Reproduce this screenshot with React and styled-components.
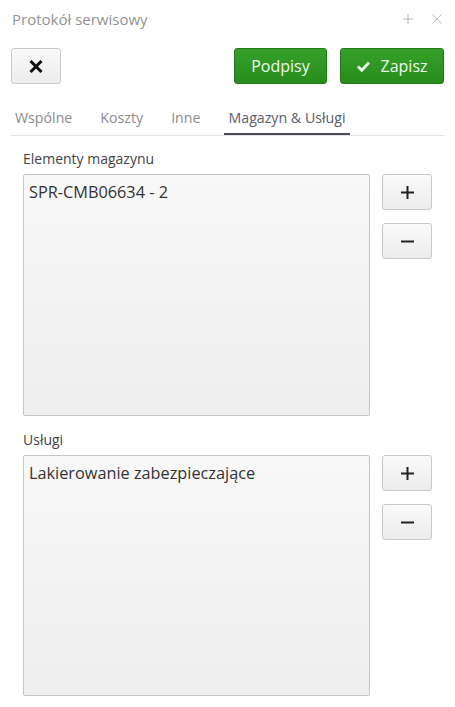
import React from "react";
import styled, { createGlobalStyle } from "styled-components";

const Global = createGlobalStyle`
  html, body { margin: 0; padding: 0; background: #fff; }
  body { font-family: "Open Sans", "Noto Sans", sans-serif; }
  * { box-sizing: border-box; }
`;

const Window = styled.div`
  width: 455px;
  height: 707px;
  display: flex;
  flex-direction: column;
  background: #fff;
`;

const TitleBar = styled.div`
  height: 38px;
  display: flex;
  align-items: center;
  padding: 0 12px 0 12px;
`;

const Title = styled.div`
  flex: 1;
  font-size: 15px;
  color: #939393;
`;

const TitleIcon = styled.button`
  border: 0;
  background: none;
  padding: 0;
  width: 12px;
  height: 12px;
  margin-left: 17px;
  display: flex;
  align-items: center;
  justify-content: center;
`;

const Toolbar = styled.div`
  display: flex;
  align-items: center;
  gap: 13px;
  padding: 10px 11px 0 11px;
`;

const Spacer = styled.div`
  flex: 1;
`;

const Btn = styled.button`
  height: 36px;
  width: ${(p) => p.$w}px;
  border-radius: 3px;
  font-family: "Open Sans", sans-serif;
  font-size: 16px;
  display: flex;
  align-items: center;
  justify-content: center;
  gap: 11px;
  padding: 0;
  cursor: pointer;
  ${(p) =>
    p.$green
      ? `
    color: #eef8ec;
    background: linear-gradient(#36a02a, #288c1c);
    border: 1px solid #227a17;
  `
      : `
    color: #222;
    background: linear-gradient(#fafafa, #ececec);
    border: 1px solid #c9c9c9;
  `}
`;

const Tabs = styled.div`
  display: flex;
  gap: 20px;
  margin: 16px 11px 0 11px;
  border-bottom: 1px solid #e2e2e2;
  height: 36px;
`;

const Tab = styled.div`
  font-size: 14.2px;
  color: ${(p) => (p.$active ? "#5c5c6c" : "#8c8c8c")};
  padding: 8px 4px 0 4px;
  height: 35px;
  line-height: 20px;
  margin-bottom: -1px;
  border-bottom: ${(p) => (p.$active ? "2px solid #4a4a5e" : "2px solid transparent")};
`;

const Section = styled.div`
  padding: 0 23px 0 23px;
  display: flex;
  flex-direction: column;
  margin-top: ${(p) => p.$mt}px;
`;

const Label = styled.div`
  font-size: 14px;
  color: #444;
  height: 20px;
  line-height: 20px;
  margin-bottom: 5px;
`;

const Row = styled.div`
  display: flex;
  gap: 12px;
`;

const ListBox = styled.div`
  width: 347px;
  height: ${(p) => p.$h}px;
  border: 1px solid #c6c6c6;
  border-radius: 2px;
  background: linear-gradient(#f8f8f8, #eeeeee);
  padding: 5px 5px;
`;

const Item = styled.div`
  font-size: 16.3px;
  color: #333;
  line-height: 24px;
`;

const SideButtons = styled.div`
  display: flex;
  flex-direction: column;
  gap: 13px;
`;

const SmallBtn = styled.button`
  width: 50px;
  height: 36px;
  border: 1px solid #c9c9c9;
  border-radius: 3px;
  background: linear-gradient(#fafafa, #ececec);
  display: flex;
  align-items: center;
  justify-content: center;
  padding: 0;
`;

const PlusIcon = () => (
  <svg width="13" height="13" viewBox="0 0 13 13">
    <path d="M6.5 0v13M0 6.5h13" stroke="#222" strokeWidth="2" />
  </svg>
);
const MinusIcon = () => (
  <svg width="13" height="13" viewBox="0 0 13 13">
    <path d="M0 6.5h13" stroke="#222" strokeWidth="2" />
  </svg>
);

function ListSection({ label, item, h, mt }) {
  return (
    <Section $mt={mt}>
      <Label>{label}</Label>
      <Row>
        <ListBox $h={h}>
          <Item>{item}</Item>
        </ListBox>
        <SideButtons>
          <SmallBtn aria-label="Dodaj"><PlusIcon /></SmallBtn>
          <SmallBtn aria-label="Usuń"><MinusIcon /></SmallBtn>
        </SideButtons>
      </Row>
    </Section>
  );
}

export default function App() {
  return (
    <>
      <Global />
      <Window>
        <TitleBar>
          <Title>Protokół serwisowy</Title>
          <TitleIcon aria-label="Nowy">
            <svg width="10" height="10" viewBox="0 0 10 10">
              <path d="M5 0v10M0 5h10" stroke="#b8b8b8" strokeWidth="1" />
            </svg>
          </TitleIcon>
          <TitleIcon aria-label="Zamknij">
            <svg width="10" height="10" viewBox="0 0 10 10">
              <path d="M0.5 0.5l9 9M9.5 0.5l-9 9" stroke="#b8b8b8" strokeWidth="1" />
            </svg>
          </TitleIcon>
        </TitleBar>
        <Toolbar>
          <Btn $w={50} aria-label="Anuluj">
            <svg width="14" height="13" viewBox="0 0 14 13">
              <path d="M1.5 1l11 11M12.5 1l-11 11" stroke="#111" strokeWidth="3" />
            </svg>
          </Btn>
          <Spacer />
          <Btn $green $w={93}>Podpisy</Btn>
          <Btn $green $w={104}>
            <svg width="13" height="11" viewBox="0 0 13 11">
              <path d="M1 5.5l3.8 3.8L12 1.5" stroke="#eef8ec" strokeWidth="2.8" fill="none" />
            </svg>
            Zapisz
          </Btn>
        </Toolbar>
        <Tabs>
          <Tab>Wspólne</Tab>
          <Tab>Koszty</Tab>
          <Tab>Inne</Tab>
          <Tab $active>Magazyn &amp; Usługi</Tab>
        </Tabs>
        <ListSection label="Elementy magazynu" item="SPR-CMB06634 - 2" h={242} mt={13} />
        <ListSection label="Usługi" item="Lakierowanie zabezpieczające" h={241} mt={14} />
      </Window>
    </>
  );
}
